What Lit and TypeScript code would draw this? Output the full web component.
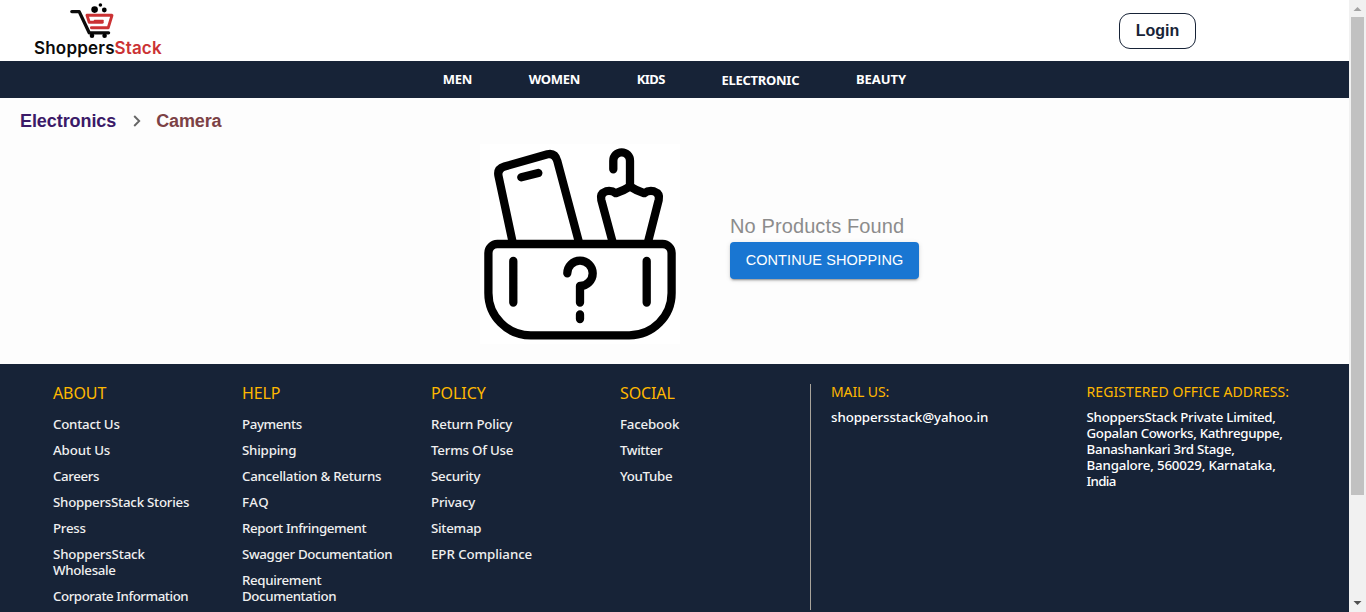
import { LitElement, html, css, svg } from "lit";
import { customElement, property } from "lit/decorators.js";

/* A line of text whose tracking is set so that it spans a given width. */
@customElement("fit-text")
class FitText extends LitElement {
  static styles = css`
    :host { display: block; white-space: nowrap; }
    .line { display: inline-block; }
  `;
  @property() text = "";
  @property({ type: Number }) width = 0;
  render() {
    return html`<span class="line">${this.text}</span>`;
  }
  updated() {
    const line = this.renderRoot.querySelector(".line") as HTMLElement;
    line.style.letterSpacing = "0";
    const natural = line.getBoundingClientRect().width;
    line.style.letterSpacing = `${(this.width + 0.2 - natural) / this.text.length}px`;
  }
}

type Line = [string, number];
const fit = ([text, width]: Line) => html`<fit-text .text=${text} .width=${width}></fit-text>`;

const NAV: Line[] = [["MEN", 29], ["WOMEN", 51], ["KIDS", 28], ["ELECTRONIC", 77.5], ["BEAUTY", 50]];

const COLUMNS: { title: Line; links: Line[][] }[] = [
  {
    title: ["ABOUT", 53],
    links: [
      [["Contact Us", 66.5]], [["About Us", 57]], [["Careers", 46]],
      [["ShoppersStack Stories", 136]], [["Press", 32.5]],
      [["ShoppersStack", 91.5], ["Wholesale", 62.5]], [["Corporate Information", 135]],
    ],
  },
  {
    title: ["HELP", 38],
    links: [
      [["Payments", 59.5]], [["Shipping", 54]], [["Cancellation & Returns", 139]], [["FAQ", 27]],
      [["Report Infringement", 124]], [["Swagger Documentation", 150]],
      [["Requirement", 79], ["Documentation", 94]],
    ],
  },
  {
    title: ["POLICY", 54.5],
    links: [
      [["Return Policy", 81]], [["Terms Of Use", 82]], [["Security", 49]], [["Privacy", 44]],
      [["Sitemap", 50]], [["EPR Compliance", 101]],
    ],
  },
  {
    title: ["SOCIAL", 54.5],
    links: [[["Facebook", 59]], [["Twitter", 42]], [["YouTube", 52]]],
  },
];

const ADDRESS: Line[] = [
  ["ShoppersStack Private Limited,", 189],
  ["Gopalan Coworks, Kathreguppe,", 196],
  ["Banashankari 3rd Stage,", 148],
  ["Bangalore, 560029, Karnataka,", 189],
  ["India", 29],
];

const cart = svg`
  <g fill="none" stroke-linejoin="round" stroke-linecap="round">
    <path d="M5.8 11.6H13.2L23.2 32.8H42.6" stroke="#0b0b0b" stroke-width="3.3"/>
    <path d="M25.4 27.8H42.2L46 15.3H21L23.2 22.3H36.4" stroke="#cb3234" stroke-width="2.9"/>
    <path d="M28.5 20.6H37" stroke="#cb3234" stroke-width="1.6"/>
  </g>
  <circle cx="26" cy="35.8" r="2.3"/><circle cx="38.6" cy="35.8" r="2.3"/>
  <circle cx="28.6" cy="9.6" r="3.3"/><circle cx="34.4" cy="5" r="1.8"/><circle cx="38.3" cy="10" r="2.4"/>`;

@customElement("app-root")
class AppRoot extends LitElement {
  static styles = css`
    :host {
      display: flex; width: 1366px; height: 612px; overflow: hidden;
      font-family: "Liberation Sans", Arial, sans-serif; background: #fdfdfd;
    }
    * { box-sizing: border-box; }
    .page { width: 1349px; height: 612px; display: flex; flex-direction: column; overflow: hidden; }
    .top { height: 61px; flex: none; background: #fff; display: flex; justify-content: space-between; padding: 0 153px 0 34px; }
    .logo { width: 128px; }
    .cart { display: block; margin-left: 32px; }
    .brand { display: flex; font: 600 17px/18px Inter, sans-serif; color: #0b0b0b; margin-top: -1px; }
    .brand .first { width: 80.5px; }
    .brand .second { color: #cb3234; }
    .login {
      width: 77px; height: 36px; margin-top: 13px; border: 1px solid #172337; border-radius: 11px;
      background: #fff; color: #172337; font: bold 16px/33px "Liberation Sans", Arial, sans-serif; text-align: center; padding: 0 0 1px;
    }
    .nav {
      height: 37px; flex: none; background: #172337; color: #fff; display: flex; justify-content: center;
      gap: 56.7px; font: 700 13px/37px "Noto Sans", sans-serif;
    }
    .nav .low { padding-top: 1px; }
    .crumbs { height: 46px; flex: none; display: flex; align-items: center; padding-left: 20px; font-weight: bold; font-size: 18px; }
    .crumbs .parent { color: #3b1a68; }
    .crumbs .leaf { color: #7c4246; }
    .crumbs .sep { margin: 0 14px 0 16px; display: block; }
    .empty { height: 220px; flex: none; display: flex; padding-left: 480px; }
    .art { width: 200px; height: 200px; background: #fff; display: block; }
    .msg { margin-left: 50px; padding-top: 70px; }
    .msg .none { font-size: 20px; line-height: 24px; color: #8c8c8c; }
    .msg .go {
      display: flex; align-items: center; justify-content: center; width: 189px; height: 37px; margin-top: 4px; padding: 0 0 2px;
      border: 0; border-radius: 4px; background: #1976d2; color: #fff; font: 14.5px "Liberation Sans", Arial, sans-serif;
      box-shadow: 0 3px 1px -2px rgba(0,0,0,.2), 0 2px 2px rgba(0,0,0,.14), 0 1px 5px rgba(0,0,0,.12);
    }
    .footer { flex: 1; background: #172337; display: flex; padding: 20px 0 2px 53px; color: #f0f0f0; }
    .col { width: 189px; }
    .title { color: #ffb800; font: 16px/20px "Noto Sans", sans-serif; margin: -1px 0 13px; }
    .link { font: 500 13.3px/16px "Noto Sans", sans-serif; margin-bottom: 10px; }
    .rule { width: 1px; height: 226px; background: #a9a49b; margin-left: 1px; }
    .mail { width: 255.5px; margin-left: 20px; }
    .info { font: 500 13.3px/16px "Noto Sans", sans-serif; color: #fff; }
    .small { color: #ffb800; font: 14px/18px "Noto Sans", sans-serif; margin: -1px 0 8px; }
    .bar { width: 17px; height: 612px; background: #f1f1f1; display: flex; flex-direction: column; align-items: center; }
    .arrow { flex: none; display: block; }
    .thumb { width: 13px; height: 478px; background: #c1c1c1; }
    .space { flex: 1; }
  `;

  render() {
    return html`
      <div class="page">
        <header class="top">
          <div class="logo">
            <svg class="cart" width="50" height="40" viewBox="0 0 50 40">${cart}</svg>
            <div class="brand">
              <span class="first">${fit(["Shoppers", 80.5])}</span>
              <span class="second">${fit(["Stack", 47])}</span>
            </div>
          </div>
          <button class="login">Login</button>
        </header>
        <nav class="nav">
          ${NAV.map((n) => html`<div class=${n[0] === "ELECTRONIC" ? "low" : ""}>${fit(n)}</div>`)}
        </nav>
        <div class="crumbs">
          <span class="parent">${fit(["Electronics", 96])}</span>
          <svg class="sep" width="10" height="14" viewBox="0 0 10 14"><path d="M2.2 2 7.2 7 2.2 12" fill="none" stroke="#666" stroke-width="1.9"/></svg>
          <span class="leaf">${fit(["Camera", 65])}</span>
        </div>
        <main class="empty">
          <svg class="art" viewBox="0 0 200 200" fill="none" stroke="#000" stroke-width="8.3" stroke-linecap="round" stroke-linejoin="round">
            <path d="M8.4 109a9 9 0 0 1 9-9H182.6a9 9 0 0 1 9 9V149a42.3 42.3 0 0 1-42.3 42.3H50.7A42.3 42.3 0 0 1 8.4 149z"/>
            <path d="M33.3 117V158.5M166.7 117V158.5M87.3 129.3A12.7 12.7 0 1 1 100 142V158.5M100 170.5V175"/>
            <path d="M32.6 98 18.5 32Q17 24.8 24.5 22.5L67.5 10.3Q75 8.8 77.3 17L98.9 98M41.3 33.3 58.3 29"/>
            <path d="M133.3 25.3V16.7a8.35 8.35 0 0 1 16.7 0V42.5"/>
            <path d="M132.6 98 121.3 56Q119.8 49.5 126 47.3Q131.5 46 135.7 49.2Q144 46.5 150 42.5Q156 46.5 164.3 49.2Q168.5 46 174 47.3Q180.2 49.5 178.7 56L168 98"/>
          </svg>
          <div class="msg">
            <div class="none">${fit(["No Products Found", 174])}</div>
            <button class="go">${fit(["CONTINUE SHOPPING", 157.5])}</button>
          </div>
        </main>
        <footer class="footer">
          ${COLUMNS.map((c) => html`
            <div class="col">
              <div class="title">${fit(c.title)}</div>
              ${c.links.map((l) => html`<div class="link">${l.map(fit)}</div>`)}
            </div>`)}
          <div class="rule"></div>
          <div class="mail">
            <div class="small">${fit(["MAIL US:", 58])}</div>
            <div class="info">${fit(["shoppersstack@yahoo.in", 157])}</div>
          </div>
          <div>
            <div class="small">${fit(["REGISTERED OFFICE ADDRESS:", 202.5])}</div>
            <div class="info">${ADDRESS.map(fit)}</div>
          </div>
        </footer>
      </div>
      <div class="bar">
        <svg class="arrow" width="17" height="17"><path d="M4.5 11 8.5 7 12.5 11z" fill="#a3a3a3"/></svg>
        <div class="thumb"></div>
        <div class="space"></div>
        <svg class="arrow" width="17" height="17"><path d="M4.5 6 8.5 10 12.5 6z" fill="#505050"/></svg>
      </div>`;
  }
}
